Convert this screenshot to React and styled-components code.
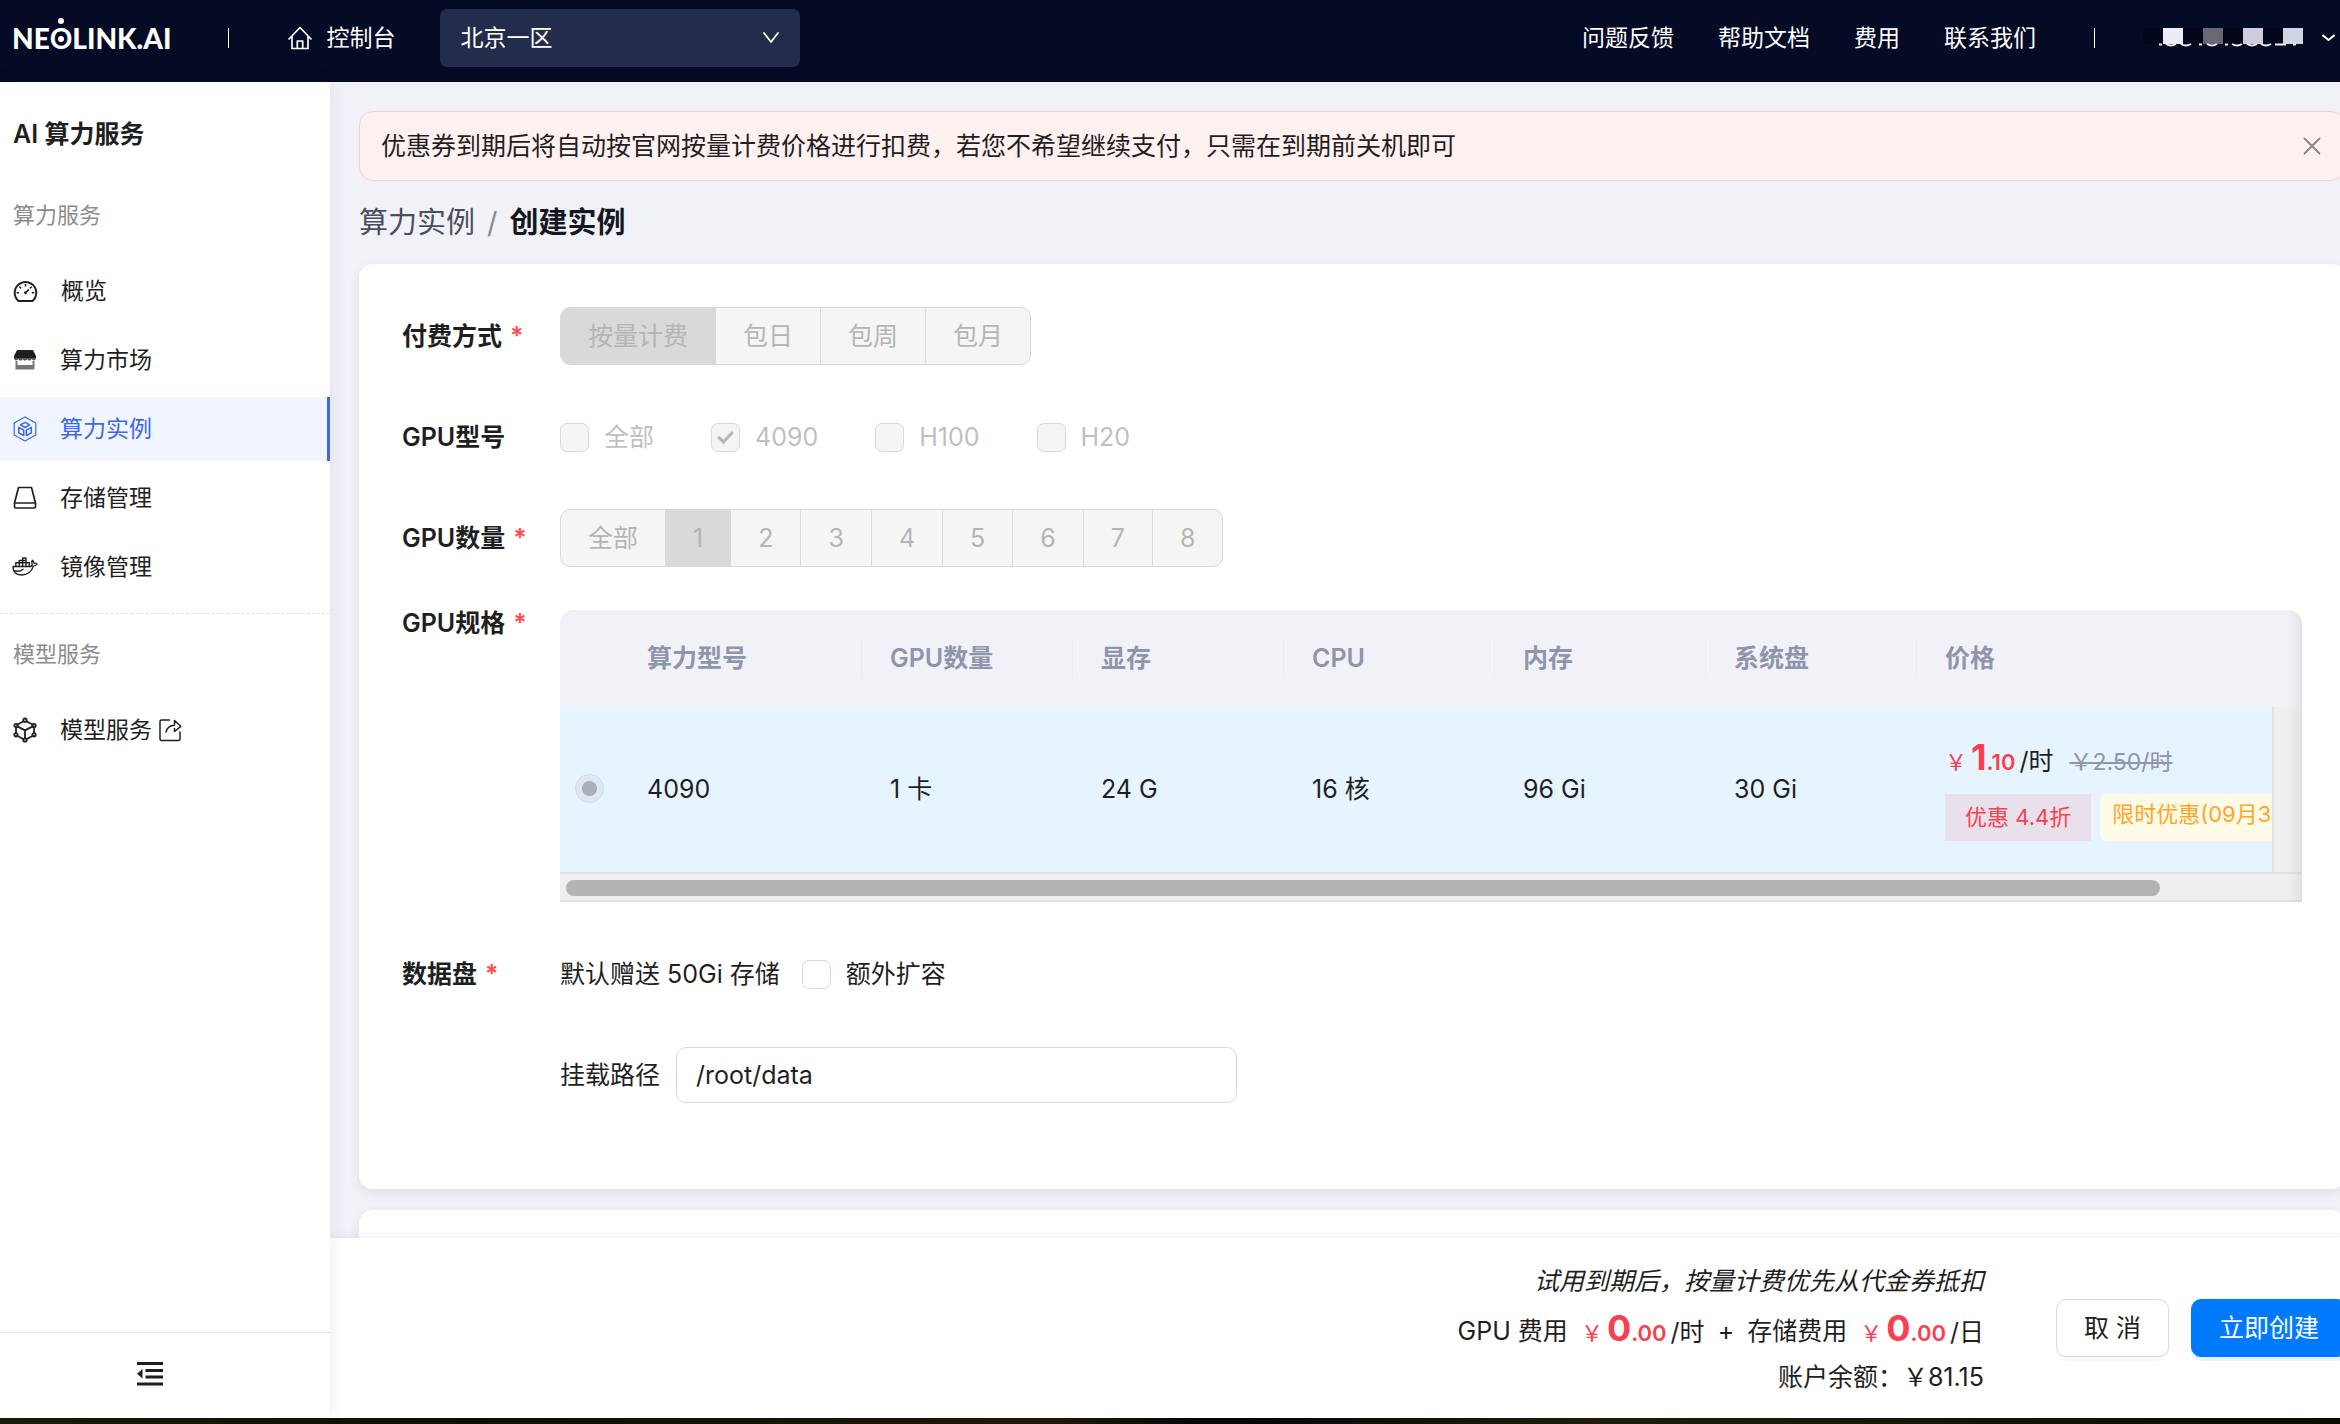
import React from "react";
import styled, { createGlobalStyle, css } from "styled-components";
import { AiOutlineDashboard } from "react-icons/ai";

const GlobalStyle = createGlobalStyle`
  *, *::before, *::after { box-sizing: border-box; }
  body {
    margin: 0;
    background: #0d0f04;
    color: #1f1f1f;
    font-family: Inter, "Noto Sans CJK SC", sans-serif;
    font-size: 25px;
    line-height: 40px;
  }
  input, select, button { font: inherit; color: inherit; }
  a { color: inherit; text-decoration: none; }
`;

/* ---------- shell ---------- */

const Page = styled.div`
  display: flex;
  flex-direction: column;
  height: 100vh;
  padding-bottom: 6px;
  overflow: hidden;
  background: linear-gradient(to right, #1a1c06, #0d0f04 20%, #1c1a08 45%, #04040a 52%, #1e1e0a 68%, #0a0c03);
`;

const Header = styled.header`
  display: flex;
  align-items: center;
  flex: none;
  height: 82px;
  padding: 0 5px 7px 12px;
  background: #050a25;
  color: #fff;
  font-size: 23px;
`;

const Body = styled.div`
  display: flex;
  flex: 1;
  min-height: 0;
`;

const Main = styled.main`
  display: flex;
  flex-direction: column;
  flex: 1;
  min-width: 0;
  overflow: hidden;
  background: #f1f2f8;
`;

/* ---------- header ---------- */

const Logo = styled.a`
  font-family: Lato, sans-serif;
  font-size: 28px;
  font-weight: 900;
  line-height: 40px;
`;

const LogoO = styled.span`
  position: relative;
  font-weight: 700;
  &::before, &::after {
    content: "";
    position: absolute;
    left: 50%;
    width: 6px;
    height: 6px;
    margin-left: -3px;
    border-radius: 50%;
    background: #fff;
  }
  &::before { top: -3px; }
  &::after { top: 15px; }
`;

const Divider = styled.span`
  width: 1px;
  height: 20px;
  background: #fff;
`;

const ConsoleLink = styled.a`
  display: flex;
  align-items: center;
  gap: 14px;
  margin: 0 45px 0 59px;
`;

const HeaderGap = styled.span`
  width: 57px;
`;

const RegionPicker = styled.div`
  position: relative;
  width: 360px;
  svg {
    position: absolute;
    right: 20px;
    top: 22px;
    pointer-events: none;
  }
`;

const RegionSelect = styled.select`
  display: block;
  width: 100%;
  height: 58px;
  padding: 0 20px;
  border: 0;
  border-radius: 7px;
  appearance: none;
  background: #242c4b;
  color: #fff;
`;

const TopNav = styled.nav`
  display: flex;
  align-items: center;
  gap: 44px;
  margin: 0 58px 0 auto;
`;

const Account = styled.button`
  display: flex;
  align-items: center;
  gap: 19px;
  margin-left: 48px;
  padding: 0;
  border: 0;
  background: none;
`;

/* ---------- sidebar ---------- */

const Sidebar = styled.aside`
  display: flex;
  flex-direction: column;
  flex: none;
  width: 330px;
  background: #fff;
  box-shadow: 0 0 18px rgba(20, 20, 60, 0.08);
  z-index: 1;
`;

const SideTitle = styled.h1`
  margin: 32px 13px 41px;
  font-size: 25px;
  font-weight: 600;
  line-height: 40px;
`;

const SideGroup = styled.h2`
  margin: 0 13px;
  color: #8c8c8c;
  font-size: 22px;
  font-weight: 400;
  line-height: 40px;
`;

const SideMenu = styled.nav`
  display: flex;
  flex-direction: column;
  gap: 5px;
  padding: 24px 0 14px;
  ${(p) => p.$divided && css`
    border-bottom: 1px dashed #e2e2e2;
    margin-bottom: 20px;
  `}
`;

const SideItem = styled.a`
  display: flex;
  align-items: center;
  height: 64px;
  padding-left: 12px;
  border-right: 3px solid ${(p) => (p.$active ? "#3b67ea" : "transparent")};
  background: ${(p) => (p.$active ? "#f0f5ff" : "transparent")};
  color: ${(p) => (p.$active ? "#3b67ea" : "#1f1f1f")};
  font-size: 23px;
  > svg:first-child { margin-right: 22px; }
  > svg + svg { margin-left: 6px; }
`;

const SideFoot = styled.div`
  display: flex;
  justify-content: center;
  margin-top: auto;
  height: 86px;
  padding: 0 30px 3px 0;
  border-top: 1px solid #e6e6e6;
`;

const IconButton = styled.button`
  display: flex;
  align-items: center;
  justify-content: center;
  padding: 0;
  border: 0;
  background: none;
`;

/* ---------- content ---------- */

const Content = styled.div`
  flex: 1;
  min-height: 0;
  margin-right: -5px;
  padding: 29px 0 0 29px;
`;

const Alert = styled.div`
  display: flex;
  align-items: center;
  justify-content: space-between;
  height: 70px;
  padding: 0 23px 0 21px;
  border: 1px solid #ffccc7;
  border-radius: 14px;
  background: #fff1f0;
`;

const Breadcrumb = styled.nav`
  display: flex;
  gap: 12px;
  margin: 22px 0 21px;
  color: #4a4f5e;
  font-size: 29px;
  span { color: #8c8c8c; }
  strong { color: #16181f; font-weight: 600; }
`;

const Card = styled.section`
  display: flex;
  flex-direction: column;
  gap: 43px;
  min-height: 180px;
  margin-bottom: 21px;
  padding: 43px 43px 85px;
  border-radius: 14px;
  background: #fff;
  box-shadow: 0 4px 12px rgba(20, 20, 50, 0.08);
`;

const FormRow = styled.div`
  display: flex;
  align-items: ${(p) => (p.$top ? "flex-start" : "center")};
  min-height: 58px;
`;

const FormLabel = styled.span`
  flex: none;
  width: 158px;
  font-weight: 600;
  line-height: 26px;
  em {
    margin-left: 8px;
    color: #ff4d4f;
    font-style: normal;
  }
`;

const Segments = styled.div`
  display: flex;
  height: 58px;
  border: 1px solid #d9d9d9;
  border-radius: 10px;
  overflow: hidden;
  background: #f5f5f5;
`;

const Segment = styled.label`
  display: flex;
  align-items: center;
  padding: 0 27px;
  color: #b5b5b5;
  background: ${(p) => (p.$on ? "#d9d9d9" : "transparent")};
  & + & { border-left: 1px solid #d9d9d9; }
  input {
    appearance: none;
    width: 0;
    height: 0;
    margin: 0;
  }
`;

const Checks = styled.div`
  display: flex;
  gap: 57px;
`;

const Check = styled.label`
  display: flex;
  align-items: center;
  gap: 15px;
  color: ${(p) => (p.$off ? "#bfbfbf" : "#1f1f1f")};
  white-space: nowrap;
`;

const CheckBox = styled.input`
  position: relative;
  appearance: none;
  width: 29px;
  height: 29px;
  margin: 0;
  border: 1px solid #d9d9d9;
  border-radius: 7px;
  background: #fff;
  &:disabled { background: #f5f5f5; }
  &:checked::after {
    content: "";
    position: absolute;
    left: 9px;
    top: 4px;
    width: 9px;
    height: 15px;
    border: solid #b5b5b5;
    border-width: 0 3px 3px 0;
    transform: rotate(43deg);
  }
`;

/* ---------- spec table ---------- */

const TableFrame = styled.div`
  position: relative;
  flex: 1;
  min-width: 0;
  overflow: hidden;
  border-radius: 14px 14px 0 0;
`;

const SpecTable = styled.table`
  width: 100%;
  table-layout: fixed;
  border-collapse: collapse;
`;

const Col = styled.col`
  width: ${(p) => p.$w};
`;

const Th = styled.th`
  position: relative;
  height: 97px;
  padding: 0 0 2px 29px;
  background: #f1f2f8;
  color: #8e95ac;
  font-weight: 600;
  text-align: left;
  ${(p) => p.$sep && css`
    &::before {
      content: "";
      position: absolute;
      left: 0;
      top: 28px;
      width: 1px;
      height: 40px;
      background: #ebebef;
    }
  `}
`;

const Td = styled.td`
  height: 165px;
  padding: 0 0 2px ${(p) => (p.$pick ? "15px" : "29px")};
  background: #e6f4ff;
  white-space: nowrap;
`;

const Radio = styled.input`
  display: block;
  appearance: none;
  width: 29px;
  height: 29px;
  margin: 0;
  border: 1px solid #d5d9de;
  border-radius: 50%;
  background: radial-gradient(circle, #a8b0b8 7px, #dde8f2 8px);
`;

const ScrollY = styled.div`
  position: absolute;
  top: 97px;
  right: 0;
  bottom: 30px;
  width: 30px;
  border-left: 2px solid #e1e1e1;
  background: #efefef;
`;

const ScrollX = styled.div`
  height: 30px;
  padding: 6px 142px 0 6px;
  border-top: 2px solid #e1e1e1;
  border-bottom: 2px solid #e1e1e1;
  background: #efefef;
`;

const Thumb = styled.div`
  height: 16px;
  border-radius: 8px;
  background: #b3b3b3;
`;

const EdgeShade = styled.div`
  position: absolute;
  top: 0;
  right: 0;
  bottom: 0;
  width: 14px;
  background: linear-gradient(to left, rgba(5, 5, 5, 0.06), transparent);
`;

const PriceLine = styled.div`
  display: flex;
  align-items: baseline;
`;

const AmountBox = styled.span`
  display: inline-flex;
  align-items: baseline;
`;

const Price = styled.span`
  color: #fb3f4e;
  font-size: 22px;
  font-weight: 600;
  b {
    margin-left: 4px;
    font-size: 36px;
    font-weight: 700;
  }
`;

const Currency = styled.span`
  font-weight: 400;
`;

const Unit = styled.span`
  margin-left: 4px;
`;

const OldPrice = styled.del`
  margin-left: 16px;
  color: #8e95ac;
  font-size: 23px;
`;

const Tags = styled.div`
  display: flex;
  gap: 9px;
  margin-top: 12px;
`;

const Tag = styled.span`
  flex: none;
  height: 47px;
  padding: ${(p) => (p.$time ? "0 12px" : "0 20px")};
  min-width: ${(p) => (p.$time ? "240px" : "0")};
  border-radius: ${(p) => (p.$time ? "7px" : "0")};
  background: ${(p) => (p.$time ? "#fffbe6" : "#e8e1ec")};
  color: ${(p) => (p.$time ? "#ffa52a" : "#fb3f4e")};
  font-size: 22px;
  line-height: ${(p) => (p.$time ? "40px" : "47px")};
`;

/* ---------- data disk ---------- */

const DiskNote = styled.span`
  margin-right: 22px;
`;

const PathLabel = styled.label`
  margin: 0 16px 0 158px;
`;

const PathInput = styled.input`
  width: 561px;
  height: 56px;
  padding: 0 19px;
  border: 1px solid #d9d9d9;
  border-radius: 10px;
  background: #fff;
`;

/* ---------- footer ---------- */

const Footer = styled.footer`
  display: flex;
  align-items: center;
  justify-content: flex-end;
  flex: none;
  height: 180px;
  margin-right: -7px;
  background: #fff;
  box-shadow: 0 -2px 8px rgba(20, 20, 50, 0.06);
`;

const Summary = styled.div`
  margin-right: 72px;
  padding-top: 1px;
  text-align: right;
  p { margin: 0; }
`;

const Trial = styled.p`
  font-style: italic;
`;

const Costs = styled.div`
  display: flex;
  align-items: center;
  justify-content: flex-end;
  height: 56px;
  padding-top: 4px;
  ${AmountBox} { margin-left: 13px; }
`;

const Plus = styled.span`
  margin: 0 13px;
`;

const Button = styled.button`
  height: 58px;
  margin-right: ${(p) => (p.$primary ? "0" : "22px")};
  padding: 0 27px;
  border: 1px solid ${(p) => (p.$primary ? "#007bff" : "#d9d9d9")};
  border-radius: 10px;
  background: ${(p) => (p.$primary ? "#007bff" : "#fff")};
  box-shadow: 0 4px 0 ${(p) => (p.$primary ? "rgba(5, 125, 255, 0.1)" : "rgba(0, 0, 0, 0.02)")};
  color: ${(p) => (p.$primary ? "#fff" : "#1f1f1f")};
`;

/* ---------- drawings ---------- */

const Line = ({ w = 26, h = 26, box = "0 0 26 26", sw = 1.7, children }) => (
  <svg width={w} height={h} viewBox={box} fill="none" stroke="currentColor"
    strokeWidth={sw} strokeLinejoin="round" strokeLinecap="round" aria-hidden="true">
    {children}
  </svg>
);

const HomeIcon = () => (
  <Line w={24} h={24} box="0 0 24 24">
    <path d="M1 13 12 1.5 23 13M4 10.5V22.5H20V10.5M9.3 22V15H14.7V22" />
  </Line>
);

const StoreIcon = () => (
  <svg width="26" height="26" viewBox="0 0 26 26" aria-hidden="true">
    <path fill="#1f1f1f" d="M5 3h16l3 6v2H2V9z" />
    <path fill="#555" d="M2 11h22c0 3-3.4 3-4.4 1-1 2-3.4 2-4.4 0-1 2-3.4 2-4.4 0-1 2-3.4 2-4.4 0-1 2-4.4 2-4.4-1z" />
    <path fill="#777" d="M3.5 14h2v4h15v-4h2v8.5h-19z" />
  </svg>
);

const InstanceIcon = () => (
  <Line sw={1.2}>
    <path d="M13 1 23.8 7V19L13 25 2.2 19V7z" />
    <path d="M13 6.3 17.6 8.9 13 11.5 8.4 8.9z" strokeWidth="1.5" />
    <path d="M6.7 11.3 11.7 14.1V19.5L6.7 16.8z" strokeWidth="1.5" />
    <path d="M19.3 11.3 14.3 14.1V19.5L19.3 16.8z" strokeWidth="1.5" />
  </Line>
);

const DiskIcon = () => (
  <Line>
    <path d="M6.5 2.5H19.5L23.5 18V21.5Q23.5 23 22 23H4Q2.5 23 2.5 21.5V18z" />
    <path d="M2.8 18H23.2" />
  </Line>
);

const DockerIcon = () => (
  <Line sw={1.4}>
    <path d="M1 12.5H18.8C20 12 20.3 11 20.2 10 19.4 8.5 19.6 7.3 20.4 6.3 21.5 7.2 22 8 22 9.2 23 9.1 24.2 9.4 25 10 24.2 11.5 23 11.9 21.5 11.9 19.5 18 15.5 21 9.5 21 4 21 .8 18 1 12.5z" />
    <path d="M3.8 12.5V8.8H17.3V12.5M7.2 12.5V6.5H14V12.5M10.6 12.5V4H14V6.5M2 16.8C6 17.8 9 17 11 15.2" />
  </Line>
);

const ModelIcon = () => (
  <Line sw={1.8}>
    <path d="M11.3 4.5 5 7.7M14.7 4.5 21 7.7M4 10.5V16M22 10.5V16M5.5 19 11.3 22M20.5 19 14.7 22M5.8 9.6 13 13.4 20.2 9.6M13 13.4V21" />
    <circle cx="13" cy="3.2" r="1.7" />
    <circle cx="4" cy="8.5" r="1.7" />
    <circle cx="22" cy="8.5" r="1.7" />
    <circle cx="4" cy="17.8" r="1.7" />
    <circle cx="22" cy="17.8" r="1.7" />
    <circle cx="13" cy="23" r="1.7" />
  </Line>
);

const ShareIcon = () => (
  <Line w={24} h={24} box="0 0 24 24" sw={1.5}>
    <path d="M11.5 2H3.5Q2 2 2 3.5V21Q2 22.5 3.5 22.5H20.5Q22 22.5 22 21V14" />
    <path d="M8 14C9 10 12 7.5 16.5 7.3V2.5L22.8 8.3 16.5 13.5V10.5" />
  </Line>
);

const FoldIcon = () => (
  <svg width="26" height="24" viewBox="0 0 26 24" fill="#1f1f1f" aria-hidden="true">
    <path d="M0 0h26v3H0zM8.5 7H26v3H8.5zM8.5 13.5H26v3H8.5zM0 20.5h26v3H0zM0 11.7 5.5 7v9.5z" />
  </svg>
);

const CloseIcon = () => (
  <Line w={18} h={18} box="0 0 18 18" sw={1.8}>
    <path d="M1.5 1.5 16.5 16.5M16.5 1.5 1.5 16.5" stroke="#8c8383" />
  </Line>
);

const MaskedName = () => (
  <svg width="160" height="20" viewBox="0 0 160 20" role="img" aria-label="账户">
    <rect width="160" height="16" rx="4" fill="#03061a" />
    <rect x="20" width="20" height="16" fill="#ececf6" />
    <rect x="60" width="20" height="16" fill="#696675" />
    <rect x="100" width="20" height="16" fill="#cfcddd" />
    <rect x="140" width="20" height="16" fill="#d0d3e3" />
    <path fill="none" stroke="#f2f0f0" strokeWidth="2" d="M16 16.5h3M23 16q5 3 10 0M38 16q5 3 10 0M56 16.5h3M64 16q5 3 10 0M82 16.5h3M89 16q5 3 10 0M104 16q5 3 10 0M118 16q5 3 10 0M132 16.5h11M150 16.5h3" />
  </svg>
);

/* ---------- data ---------- */

const SERVICES = [
  ["概览", () => <AiOutlineDashboard size={27} />],
  ["算力市场", StoreIcon],
  ["算力实例", InstanceIcon],
  ["存储管理", DiskIcon],
  ["镜像管理", DockerIcon],
];

const COLUMNS = ["算力型号", "GPU数量", "显存", "CPU", "内存", "系统盘", "价格"];
const CELLS = ["4090", "1 卡", "24 G", "16 核", "96 Gi", "30 Gi"];

const Label = ({ text, required }) => (
  <FormLabel>
    {text}
    {required && <em>*</em>}
  </FormLabel>
);

const SegmentGroup = ({ name, options, value }) => (
  <Segments role="radiogroup" aria-label={name}>
    {options.map((o) => (
      <Segment key={o} $on={o === value}>
        <input type="radio" name={name} disabled defaultChecked={o === value} />
        {o}
      </Segment>
    ))}
  </Segments>
);

const Amount = ({ whole, cents, unit }) => (
  <AmountBox>
    <Price><Currency>￥</Currency><b>{whole}</b>{cents}</Price>
    <Unit>{unit}</Unit>
  </AmountBox>
);

export default function App() {
  return (
    <Page>
      <GlobalStyle />
      <Header>
        <Logo href="#">NE<LogoO>O</LogoO>LINK.AI</Logo>
        <HeaderGap />
        <Divider />
        <ConsoleLink href="#"><HomeIcon />控制台</ConsoleLink>
        <RegionPicker>
          <RegionSelect aria-label="区域"><option>北京一区</option></RegionSelect>
          <Line w={18} h={14} box="0 0 18 14" sw={1.8}><path d="M2 2 9 11 16 2" /></Line>
        </RegionPicker>
        <TopNav>
          {["问题反馈", "帮助文档", "费用", "联系我们"].map((t) => <a key={t} href="#">{t}</a>)}
        </TopNav>
        <Divider />
        <Account aria-label="账户菜单">
          <MaskedName />
          <svg width="13" height="8" viewBox="0 0 13 8" fill="none" stroke="#fff" strokeWidth="2" aria-hidden="true">
            <path d="M.5 1 6.5 6 12.5 1" />
          </svg>
        </Account>
      </Header>

      <Body>
        <Sidebar>
          <SideTitle>AI 算力服务</SideTitle>
          <SideGroup>算力服务</SideGroup>
          <SideMenu $divided>
            {SERVICES.map(([text, Icon]) => (
              <SideItem key={text} href="#" $active={text === "算力实例"}><Icon />{text}</SideItem>
            ))}
          </SideMenu>
          <SideGroup>模型服务</SideGroup>
          <SideMenu>
            <SideItem href="#"><ModelIcon />模型服务<ShareIcon /></SideItem>
          </SideMenu>
          <SideFoot>
            <IconButton aria-label="收起菜单"><FoldIcon /></IconButton>
          </SideFoot>
        </Sidebar>

        <Main>
          <Content>
            <Alert role="alert">
              优惠券到期后将自动按官网按量计费价格进行扣费，若您不希望继续支付，只需在到期前关机即可
              <IconButton aria-label="关闭"><CloseIcon /></IconButton>
            </Alert>
            <Breadcrumb>
              <a href="#">算力实例</a><span>/</span><strong>创建实例</strong>
            </Breadcrumb>

            <Card>
              <FormRow>
                <Label text="付费方式" required />
                <SegmentGroup name="付费方式" options={["按量计费", "包日", "包周", "包月"]} value="按量计费" />
              </FormRow>
              <FormRow>
                <Label text="GPU型号" />
                <Checks>
                  {["全部", "4090", "H100", "H20"].map((t) => (
                    <Check key={t} $off>
                      <CheckBox type="checkbox" disabled defaultChecked={t === "4090"} />
                      {t}
                    </Check>
                  ))}
                </Checks>
              </FormRow>
              <FormRow>
                <Label text="GPU数量" required />
                <SegmentGroup name="GPU数量" options={["全部", "1", "2", "3", "4", "5", "6", "7", "8"]} value="1" />
              </FormRow>
              <FormRow $top>
                <Label text="GPU规格" required />
                <TableFrame>
                  <SpecTable>
                    <colgroup>
                      <Col $w="58px" />
                      <Col $w="243px" />
                      {COLUMNS.slice(1, 6).map((c) => <Col key={c} $w="211px" />)}
                      <Col $w="auto" />
                    </colgroup>
                    <thead>
                      <tr>
                        <Th />
                        {COLUMNS.map((c, i) => <Th key={c} $sep={i > 0}>{c}</Th>)}
                      </tr>
                    </thead>
                    <tbody>
                      <tr>
                        <Td $pick><Radio type="radio" name="spec" aria-label="4090" disabled defaultChecked /></Td>
                        {CELLS.map((c) => <Td key={c}>{c}</Td>)}
                        <Td>
                          <PriceLine>
                            <Amount whole="1" cents=".10" unit="/时" />
                            <OldPrice>￥2.50/时</OldPrice>
                          </PriceLine>
                          <Tags>
                            <Tag>优惠 4.4折</Tag>
                            <Tag $time>限时优惠(09月3</Tag>
                          </Tags>
                        </Td>
                      </tr>
                    </tbody>
                  </SpecTable>
                  <ScrollY />
                  <ScrollX><Thumb /></ScrollX>
                  <EdgeShade />
                </TableFrame>
              </FormRow>
              <FormRow>
                <Label text="数据盘" required />
                <DiskNote>默认赠送 50Gi 存储</DiskNote>
                <Check><CheckBox type="checkbox" />额外扩容</Check>
              </FormRow>
              <FormRow>
                <PathLabel htmlFor="mount-path">挂载路径</PathLabel>
                <PathInput id="mount-path" defaultValue="/root/data" />
              </FormRow>
            </Card>
            <Card />
          </Content>

          <Footer>
            <Summary>
              <Trial>试用到期后，按量计费优先从代金券抵扣</Trial>
              <Costs>
                GPU 费用
                <Amount whole="0" cents=".00" unit="/时" />
                <Plus>+</Plus>
                存储费用
                <Amount whole="0" cents=".00" unit="/日" />
              </Costs>
              <p>账户余额：￥81.15</p>
            </Summary>
            <Button>取 消</Button>
            <Button $primary>立即创建</Button>
          </Footer>
        </Main>
      </Body>
    </Page>
  );
}
